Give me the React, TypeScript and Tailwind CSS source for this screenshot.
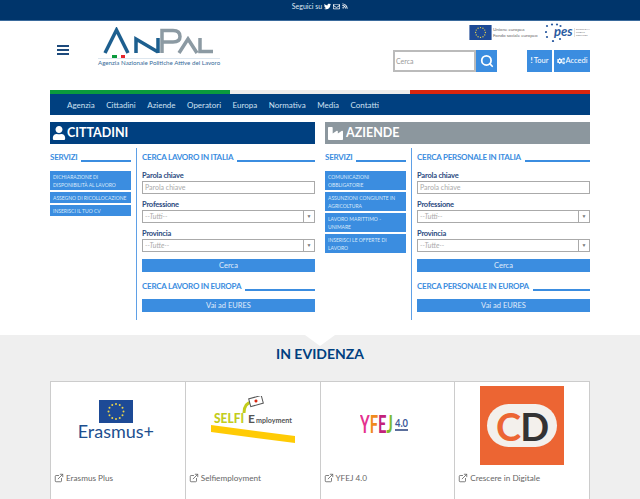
import { ReactNode } from 'react';
import { ExternalLink, Search } from 'lucide-react';
import { FaCogs, FaIndustry, FaRegEnvelope, FaRss, FaTwitter, FaUser } from 'react-icons/fa';

const EuFlag = ({ className }: { className: string }) => (
  <svg viewBox="0 0 34 23" className={className}>
    <rect width="34" height="23" fill="#1d4a96" />
    {Array.from({ length: 12 }).map((_, i) => {
      const a = (i * Math.PI) / 6;
      return <circle key={i} cx={17 + 7.5 * Math.cos(a)} cy={11.5 + 7.5 * Math.sin(a)} r="1" fill="#e8d44a" />;
    })}
  </svg>
);

const AnpalLogo = () => (
  <svg viewBox="0 0 122 33" className="h-[33px] w-[122px]" fill="none">
    <path d="M7 26 L18.5 3 L30 26" stroke="#1d5f8f" strokeWidth="3.5" />
    <path d="M38 26 V12 L60 25 M60 26 V11" stroke="#1d5f8f" strokeWidth="3.5" />
    <path d="M64 26 V3.5 H75 Q82 3.5 82 9.5 Q82 15 75 15 H64" stroke="#8c9aa3" strokeWidth="3.5" />
    <path d="M81 26 L90 12 L99 26 M102 11 V24.5 H115" stroke="#8c9aa3" strokeWidth="3.5" />
    <rect x="14" y="28" width="5" height="3" fill="#0b9a3c" />
    <rect x="23" y="28" width="4" height="3" fill="#e5262c" />
    <rect x="0" y="31" width="122" height="1" fill="#dde6ee" />
  </svg>
);

const PesLogo = () => (
  <svg viewBox="0 0 45 19" className="h-[19px] w-[45px]">
    {[[2, 3], [7, 1.5], [12, 1.5], [15.5, 3], [1, 9], [2, 14], [8, 18], [15, 16]].map(([cx, cy]) => (
      <circle key={`${cx}-${cy}`} cx={cx} cy={cy} r="1.1" fill="#2a5aa0" />
    ))}
    <text x="9" y="13" fontSize="13" fontWeight="700" fontStyle="italic" fill="#2a5aa0">pes</text>
    <rect x="29" y="5" width="0.6" height="9" fill="#cccccc" />
    <text x="31" y="7" fontSize="2.6" fill="#777777">EUROPEAN</text>
    <text x="31" y="10" fontSize="2.6" fill="#777777">PUBLIC</text>
    <text x="31" y="13" fontSize="2.6" fill="#777777">SERVICES</text>
  </svg>
);

const SelfieLogo = () => (
  <svg viewBox="0 0 90 50" className="h-[50px] w-[90px]" fill="none">
    <path d="M33 17 Q33 7 41 6" stroke="#c3cc1c" strokeWidth="3" />
    <g transform="rotate(-15 45 5)">
      <rect x="38.5" y="1" width="13" height="8" fill="#ffffff" stroke="#555555" />
      <circle cx="45" cy="5" r="1.5" fill="#d9260f" />
    </g>
    <text x="3" y="27" fontSize="14" fontWeight="900" fill="#c3cc1c" textLength="30" lengthAdjust="spacingAndGlyphs">SELFI</text>
    <text x="37" y="27" fontSize="12" fontWeight="700" fill="#555555">E</text>
    <text x="45" y="27" fontSize="7" fontWeight="700" fill="#555555" textLength="36" lengthAdjust="spacingAndGlyphs">mployment</text>
    <polygon points="0,29 84,40 84,47 0,36" fill="#ffcb05" />
  </svg>
);

const YfejLogo = () => (
  <svg viewBox="0 0 50 32" className="h-[32px] w-[50px]" fontWeight="700">
    <text x="0" y="25" fontSize="24" textLength="33" lengthAdjust="spacingAndGlyphs">
      <tspan fill="#e5318f">Y</tspan>
      <tspan fill="#f08a1d">F</tspan>
      <tspan fill="#c2227a">E</tspan>
      <tspan fill="#7cba2d">J</tspan>
    </text>
    <text x="35" y="19" fontSize="11" fill="#3c5a9a" textLength="13" lengthAdjust="spacingAndGlyphs">4.0</text>
    <rect x="35" y="21" width="13" height="2" fill="#5b6f9c" />
  </svg>
);

const SectionTitle = ({ children }: { children: ReactNode }) => (
  <div className="flex items-end gap-[4px]">
    <span className="text-[8px] leading-[14px] font-bold tracking-[-0.25px] whitespace-nowrap text-[#3b8de0]">{children}</span>
    <span className="mb-[2px] h-[2px] flex-1 bg-[#3b8de0]" />
  </div>
);

const Field = ({ label, value, select }: { label: string; value: string; select?: boolean }) => (
  <div className="mb-[6px]">
    <div className="text-[7.5px] leading-[10px] font-bold tracking-[-0.2px] text-[#2a4a80]">{label}</div>
    <div className="flex h-[13px] items-center border border-[#aaa] bg-white text-[7px] text-[#aaa]">
      <span className={`flex-1 pl-[2px] ${select ? 'italic' : ''}`}>{value}</span>
      {select && (
        <span className="flex h-full w-[11px] items-center justify-center border-l border-[#aaa] text-[5px] text-[#777]">▼</span>
      )}
    </div>
  </div>
);

const BlueButton = ({ children }: { children: ReactNode }) => (
  <div className="flex h-[13px] items-center justify-center bg-[#3b8de0] text-[7.5px] text-[#e0ecfa]">{children}</div>
);

const SideLink = ({ children }: { children: ReactNode }) => (
  <div className="mb-[2px] bg-[#3b8de0] py-[1.5px] pl-[3px] text-[5px] leading-[8px] whitespace-pre text-[#d8e8fa] uppercase">{children}</div>
);

const Panel = ({
  title,
  titleClass,
  icon,
  links,
  first,
  europe,
}: {
  title: string;
  titleClass: string;
  icon: ReactNode;
  links: string[];
  first: string;
  europe: string;
}) => (
  <div className="w-[265px]">
    <div className={`flex h-[22px] items-center text-white ${titleClass}`}>
      {icon}
      <span className="text-[12.5px] leading-none font-bold">{title}</span>
    </div>
    <div className="mt-[4px] flex h-[172px]">
      <div className="w-[81px] shrink-0 pt-[2px]">
        <SectionTitle>SERVIZI</SectionTitle>
        <div className="mt-[7px]">
          {links.map((link) => (
            <SideLink key={link}>{link}</SideLink>
          ))}
        </div>
      </div>
      <div className="mx-[5px] w-px shrink-0 bg-[#5fa0e6]" />
      <div className="min-w-0 flex-1 pt-[2px]">
        <SectionTitle>{first}</SectionTitle>
        <div className="mt-[7px] mb-[7px]">
          <Field label="Parola chiave" value="Parola chiave" />
          <Field label="Professione" value="--Tutti--" select />
          <Field label="Provincia" value="--Tutte--" select />
        </div>
        <BlueButton>Cerca</BlueButton>
        <div className="mt-[7px] mb-[6px]">
          <SectionTitle>{europe}</SectionTitle>
        </div>
        <BlueButton>Vai ad EURES</BlueButton>
      </div>
    </div>
  </div>
);

const Card = ({ label, children }: { label: string; children: ReactNode }) => (
  <div className="flex h-[118px] flex-1 flex-col border-r border-[#ccc] bg-white last:border-r-0">
    <div className="h-[89px] overflow-hidden">{children}</div>
    <div className="flex items-center gap-[2px] pl-[3px] text-[8.2px] leading-[14px] text-[#666]">
      <ExternalLink size={10} strokeWidth={2} className="text-[#666]" />
      <span>{label}</span>
    </div>
  </div>
);

export default function App() {
  return (
    <div className="h-[499px] w-[640px] overflow-hidden bg-white font-['Lato',sans-serif]">
      {/* Top strip */}
      <div className="flex h-[21px] items-center justify-center gap-[2px] border-b border-[#3a6a9c] bg-[#00356b] pb-[8px] text-[7px] text-[#dfe8f2]">
        <span>Seguici su</span>
        <FaTwitter size={7} className="text-white" />
        <FaRegEnvelope size={7} className="text-white" />
        <FaRss size={6} className="text-white" />
      </div>

      {/* Header */}
      <div className="flex h-[69px] px-[50px]">
        <div className="w-[48px] shrink-0 pt-[24px] pl-[7px]">
          <div className="flex w-[12px] flex-col gap-[2px]">
            <span className="h-[2px] bg-[#1d4a7c]" />
            <span className="h-[2px] bg-[#1d4a7c]" />
            <span className="h-[2px] bg-[#1d4a7c]" />
          </div>
        </div>
        <div className="flex w-[124px] shrink-0 flex-col pt-[6px]">
          <AnpalLogo />
          <div className="-mt-[1px] text-[6.2px] leading-[8px] whitespace-nowrap text-[#3a6c9a]">
            Agenzia Nazionale Politiche Attive del Lavoro
          </div>
        </div>
        <div className="flex flex-1 flex-col items-end">
          <div className="mt-[2px] flex h-[19px] items-center">
            <EuFlag className="h-[15px] w-[23px]" />
            <div className="ml-[1px] w-[52px] text-[4.5px] leading-[6px] text-[#666]">
              Unione europea
              <br />
              Fondo sociale europeo
            </div>
            <PesLogo />
          </div>
          <div className="mt-[8px] flex w-full justify-end">
            <div className="flex h-[22px] w-[83px] items-center border-2 border-[#bbb] bg-white pl-[1px] text-[7px] text-[#999]">Cerca</div>
            <div className="flex h-[22px] w-[21px] items-center justify-center bg-[#3b8de0]">
              <Search size={14} strokeWidth={3} className="text-white" />
            </div>
            <div className="ml-[30px] flex h-[22px] w-[25px] items-center justify-center gap-[1px] bg-[#3b8de0] text-[7.5px] text-white">
              <b>!</b>Tour
            </div>
            <div className="ml-[2px] flex h-[22px] w-[36px] items-center justify-center gap-[1px] bg-[#3b8de0] text-[7.5px] text-white">
              <FaCogs size={8} />
              Accedi
            </div>
          </div>
        </div>
      </div>

      {/* Nav */}
      <div className="mx-[50px]">
        <div className="flex h-[4px]">
          <div className="flex-1 bg-[#0b9a3c]" />
          <div className="flex-1 bg-[#ececec]" />
          <div className="flex-1 bg-[#d9260f]" />
        </div>
        <div className="flex h-[21px] items-center gap-[11.5px] bg-[#004080] pl-[17px] text-[8px] text-[#cfe0f2]">
          {['Agenzia', 'Cittadini', 'Aziende', 'Operatori', 'Europa', 'Normativa', 'Media', 'Contatti'].map((item) => (
            <span key={item}>{item}</span>
          ))}
        </div>
      </div>

      {/* Panels */}
      <div className="mx-[50px] mt-[7px] flex justify-between">
        <Panel
          title="CITTADINI"
          titleClass="gap-[1px] bg-[#004080] pl-[2px]"
          icon={<FaUser size={14} />}
          links={['Dichiarazione di\ndisponibilità al lavoro', 'Assegno di ricollocazione', 'Inserisci il tuo CV']}
          first="CERCA LAVORO IN ITALIA"
          europe="CERCA LAVORO IN EUROPA"
        />
        <Panel
          title="AZIENDE"
          titleClass="gap-[3px] bg-[#8c979e] pl-[3px]"
          icon={<FaIndustry size={15} />}
          links={['Comunicazioni\nobbligatorie', 'Assunzioni congiunte in\nagricoltura', 'Lavoro marittimo -\nUnimare', 'Inserisci le offerte di\nlavoro']}
          first="CERCA PERSONALE IN ITALIA"
          europe="CERCA PERSONALE IN EUROPA"
        />
      </div>

      {/* In evidenza */}
      <div className="relative mt-[15px] h-[170px] bg-[#efefef] pt-[10px]">
        <div className="absolute top-0 left-[305px] h-0 w-0 border-t-[11px] border-r-[15px] border-l-[15px] border-t-white border-r-transparent border-l-transparent" />
        <div className="text-center text-[14px] leading-[18px] font-bold text-[#004080]">IN EVIDENZA</div>
        <div className="mx-[50px] mt-[18px] flex border border-[#ccc]">
          <Card label="Erasmus Plus">
            <div className="flex flex-col items-center pt-[18px] pr-[4px]">
              <EuFlag className="h-[23px] w-[34px]" />
              <span className="-mt-[1px] text-[18px] leading-[18px] text-[#1d4f8f]">Erasmus+</span>
            </div>
          </Card>
          <Card label="Selfiemployment">
            <div className="pt-[14px] pl-[25px]">
              <SelfieLogo />
            </div>
          </Card>
          <Card label="YFEJ 4.0">
            <div className="pt-[26px] pl-[39px]">
              <YfejLogo />
            </div>
          </Card>
          <Card label="Crescere in Digitale">
            <div className="flex justify-center pt-[4px]">
              <div className="flex h-[79px] w-[84px] items-center justify-center bg-[#ec6533]">
                <div className="flex h-[43px] w-[70px] items-center justify-center rounded-full bg-[#f3f0ec] text-[38px] leading-none font-bold tracking-[-1px]">
                  <span className="text-[#ec6533]">C</span>
                  <span className="text-[#333]">D</span>
                </div>
              </div>
            </div>
          </Card>
        </div>
      </div>
    </div>
  );
}
